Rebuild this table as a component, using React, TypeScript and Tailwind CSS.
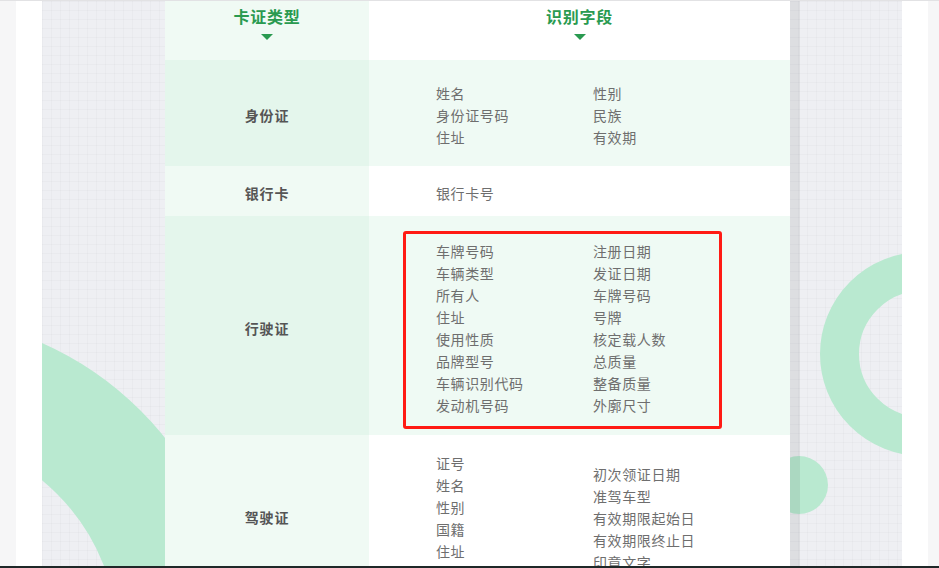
import React from 'react';

type Row = {
    label: string;
    height: string;
    strong: boolean;
    shift: string;
    left: string[];
    right: string[];
    boxed?: boolean;
};

const rows: Row[] = [
    { label: '身份证', height: 'h-[106px]', strong: true, shift: 'pt-[4px]', left: ['姓名', '身份证号码', '住址'], right: ['性别', '民族', '有效期'] },
    { label: '银行卡', height: 'h-[50px]', strong: false, shift: 'pt-[4px]', left: ['银行卡号'], right: [] },
    {
        label: '行驶证',
        height: 'h-[219px]',
        strong: true,
        shift: 'pt-[5px]',
        boxed: true,
        left: ['车牌号码', '车辆类型', '所有人', '住址', '使用性质', '品牌型号', '车辆识别代码', '发动机号码'],
        right: ['注册日期', '发证日期', '车牌号码', '号牌', '核定载人数', '总质量', '整备质量', '外廓尺寸'],
    },
    {
        label: '驾驶证',
        height: 'h-[168px]',
        strong: false,
        shift: 'pb-[3px]',
        left: ['证号', '姓名', '性别', '国籍', '住址', '出生日期'],
        right: ['初次领证日期', '准驾车型', '有效期限起始日', '有效期限终止日', '印章文字'],
    },
];

const Caret = () => <div className="mt-[7px] w-0 h-0 border-l-[6px] border-r-[6px] border-t-[6px] border-l-transparent border-r-transparent border-t-[#2a9a50]" />;

const FieldList = ({ items }: { items: string[] }) => (
    <div className="flex flex-col">
        {items.map((item) => (
            <span key={item} className="text-[14px] leading-[22px] tracking-[0.6px] text-[#6e6e6e]">{item}</span>
        ))}
    </div>
);

const App = () => {
    return (
        <div className="w-[939px] h-[568px] overflow-hidden flex flex-col bg-[#f6f6f7] font-['Noto_Sans_CJK_SC','Noto_Sans',sans-serif]">
            <div className="h-px bg-[#e2e2e4]" />
            <div className="flex flex-1 min-h-0">
                <div className="w-4 bg-[#f6f6f7]" />
                <div className="w-[26px] bg-white" />
                <div className="relative w-[860px] overflow-hidden bg-[#eeeff3] bg-[linear-gradient(rgba(0,0,0,0.018)_1px,transparent_1px),linear-gradient(90deg,rgba(0,0,0,0.018)_1px,transparent_1px)] bg-[size:9px_9px]">
                    {/* decorative rings */}
                    <div className="absolute left-[-458px] top-[314px] w-[652px] h-[652px] rounded-full border-[118px] border-[#b9e9d0]" />
                    <div className="absolute left-[778px] top-[251px] w-[204px] h-[204px] rounded-full border-[39px] border-[#b9e9d0]" />
                    <div className="absolute left-[728px] top-[455px] w-[58px] h-[58px] rounded-full bg-[#b9e9d0]" />

                    <div className="relative ml-[123px] flex">
                        <div className="w-[625px] flex flex-col">
                            <div className="flex h-[59px]">
                                <div className="w-[204px] bg-[#f0faf4] flex flex-col items-center pt-[4px]">
                                    <span className="text-[16px] leading-[22px] font-bold tracking-[0.8px] text-[#2a9a50]">卡证类型</span>
                                    <Caret />
                                </div>
                                <div className="flex-1 bg-white flex flex-col items-center pt-[4px]">
                                    <span className="text-[16px] leading-[22px] font-bold tracking-[0.8px] text-[#2a9a50]">识别字段</span>
                                    <Caret />
                                </div>
                            </div>
                            {rows.map((row) => (
                                <div key={row.label} className={`flex shrink-0 ${row.height}`}>
                                    <div className={`w-[204px] flex items-center justify-center ${row.shift} ${row.strong ? 'bg-[#e4f6ec]' : 'bg-[#f0faf4]'}`}>
                                        <span className="text-[14px] font-bold tracking-[0.8px] text-[#555555]">{row.label}</span>
                                    </div>
                                    <div className={`relative flex-1 flex items-center pl-[67px] ${row.shift} ${row.strong ? 'bg-[#effaf4]' : 'bg-white'}`}>
                                        <div className="w-[157px]">
                                            <FieldList items={row.left} />
                                        </div>
                                        <FieldList items={row.right} />
                                        {row.boxed && (
                                            <div className="absolute left-[34px] top-[15px] w-[319px] h-[198px] border-[3px] border-[#ff1a14] rounded-[3px]" />
                                        )}
                                    </div>
                                </div>
                            ))}
                        </div>
                        <div className="w-[10px] bg-black/[0.07]" />
                    </div>
                </div>
                <div className="w-[26px] bg-white" />
                <div className="flex-1 bg-[#f6f6f7]" />
            </div>
            <div className="h-[2px] bg-[#1f2828]" />
        </div>
    );
};

export default App;
